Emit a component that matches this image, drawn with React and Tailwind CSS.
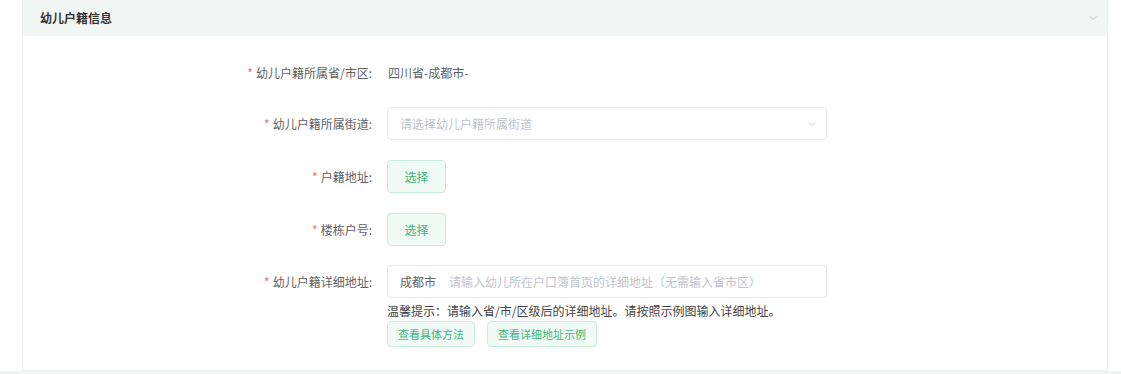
import { ChevronDown } from "lucide-react";

const Label = ({ children }) => (
  <div className="w-[364px] shrink-0 text-right pr-[15px] text-[#606266]">
    <span className="text-[#f56c6c] mr-[3px]">*</span>
    {children}:
  </div>
);

const GreenButton = ({ children, className = "" }) => (
  <button
    className={
      "rounded-[4px] border border-[#c6eedb] bg-[#f0fbf5] text-[#3cb878] " +
      className
    }
  >
    {children}
  </button>
);

const App = () => {
  return (
    <div
      className="w-[1121px] h-[374px] bg-white overflow-hidden text-[12px]"
      style={{ fontFamily: '"Noto Sans CJK SC", "Noto Sans", sans-serif' }}
    >
      <div className="ml-[22px] w-[1086px] border-l border-r border-b border-[#eef0f0] h-[371px]">
        <div className="h-[36px] bg-[#f2f6f5] flex items-center justify-between pl-[17px] pr-[8px]">
          <span className="font-bold text-[#303133]">幼儿户籍信息</span>
          <ChevronDown className="w-[12px] h-[12px] text-[#a8abb2]" strokeWidth={1.5} />
        </div>
        <div className="pt-[20px] flex flex-col">
          <div className="flex items-center h-[33px]">
            <Label>幼儿户籍所属省/市区</Label>
            <span className="pl-[1px] text-[#606266]">四川省-成都市-</span>
          </div>
          <div className="flex items-center h-[33px] mt-[18px]">
            <Label>幼儿户籍所属街道</Label>
            <div className="w-[440px] h-[33px] rounded-[4px] border border-[#e4e7ed] flex items-center justify-between pl-[12px] pr-[8px]">
              <span className="text-[#c0c4cc]">请选择幼儿户籍所属街道</span>
              <ChevronDown className="w-[12px] h-[12px] text-[#c0c4cc]" strokeWidth={1.5} />
            </div>
          </div>
          <div className="flex items-center h-[33px] mt-[20px]">
            <Label>户籍地址</Label>
            <GreenButton className="w-[59px] h-[33px]">选择</GreenButton>
          </div>
          <div className="flex items-center h-[33px] mt-[20px]">
            <Label>楼栋户号</Label>
            <GreenButton className="w-[59px] h-[33px]">选择</GreenButton>
          </div>
          <div className="flex items-start mt-[19px]">
            <div className="h-[33px] flex items-center">
              <Label>幼儿户籍详细地址</Label>
            </div>
            <div className="flex flex-col">
              <div className="w-[440px] h-[33px] rounded-[4px] border border-[#e4e7ed] flex items-center pl-[12px]">
                <span className="text-[#606266]">成都市</span>
                <span className="ml-[13px] text-[#c0c4cc]">请输入幼儿所在户口簿首页的详细地址（无需输入省市区）</span>
              </div>
              <div className="mt-[5px] leading-[16px] text-[#444]">
                温馨提示：请输入省/市/区级后的详细地址。请按照示例图输入详细地址。
              </div>
              <div className="mt-[2px] flex gap-[12px]">
                <GreenButton className="h-[26px] px-[10px] text-[11px]">查看具体方法</GreenButton>
                <GreenButton className="h-[26px] px-[10px] text-[11px]">查看详细地址示例</GreenButton>
              </div>
            </div>
          </div>
        </div>
      </div>
      <div className="h-[3px] bg-[#f2f4f4]" />
    </div>
  );
};

export default App;
